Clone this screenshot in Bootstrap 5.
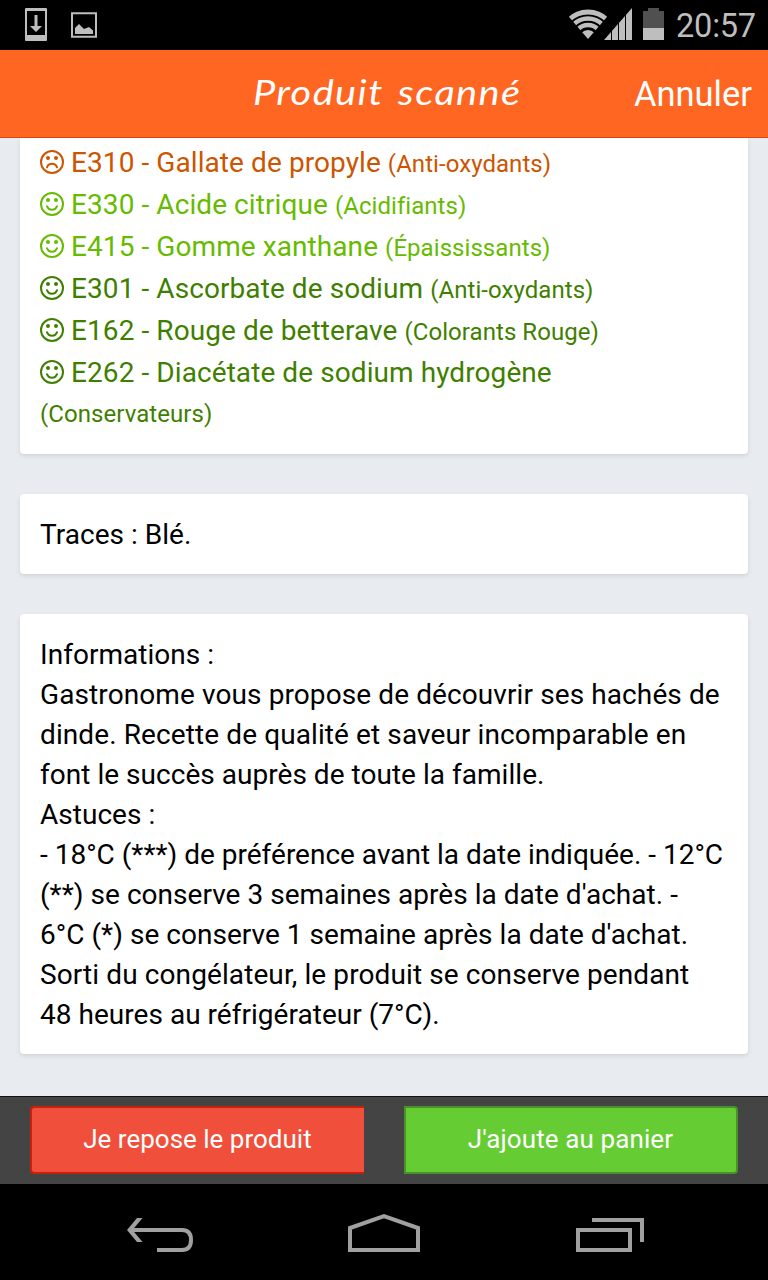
<!DOCTYPE html>
<html lang="fr">
<head>
<meta charset="utf-8">
<meta name="viewport" content="width=device-width, initial-scale=1">
<title>Produit scanné</title>
<link href="https://cdn.jsdelivr.net/npm/bootstrap@5.3.0/dist/css/bootstrap.min.css" rel="stylesheet">
<style>
body{height:1280px;overflow:hidden;background:#e8ebf0;font:28px/40px Roboto,sans-serif;color:#000}
svg{display:block;flex:none}
.status{height:50px;padding:0 12px 0 24px;background:#000;color:#bebebe}
.clock{width:80px;font-size:32.5px;line-height:52px;letter-spacing:-.2px}
.app-head{display:grid;grid-template-columns:1fr auto 1fr;height:88px;padding:0 16px;background:#f62;border-bottom:1px solid #d9480b;color:#fff}
.brand-title{font:italic 34px/84px "Segoe Print","Bradley Hand",Lato,cursive;letter-spacing:1.2px;word-spacing:3px;padding-left:5px;transform:scaleX(1.17)}
.cancel{font:34.5px/88px "Roboto",sans-serif}
.panel{border:0;border-radius:4px;padding:21px 20px 19px;box-shadow:0 2px 4px rgba(0,0,0,.1);color:#000}
.panel + .panel{margin-top:40px}
.first{border-radius:0 0 4px 4px;padding:4px 20px 20px;line-height:42px;letter-spacing:.08px}
.first div{height:42px}
.first .rest{height:40px;line-height:38px}
.first svg{display:inline-block;vertical-align:-2px;margin-right:7px}
.first small{font-size:24px;line-height:1;letter-spacing:.06px}
.bad{color:#cc5500}.good{color:#66bb00}.best{color:#3f7f00}
.loose{letter-spacing:.1px}
.info{letter-spacing:.03px}
.actions{height:88px;padding:9px 30px 10px;gap:40px;background:#444;border-top:1px solid #111}
.actions .btn{font-size:26px;line-height:38px;color:#fff;border-width:2px;padding:0 1px 2px 0}
.put{background:#f04f3b;border-color:#c9200d;border-right:0;border-radius:4px 0 0 4px}
.add{background:#6c3;border-color:#49912a;border-radius:0 4px 4px 0;letter-spacing:.1px}
.sysnav{height:96px;background:#000}
</style>
</head>
<body class="d-flex flex-column">
<svg width="0" height="0" class="position-absolute"><defs>
<g id="face" fill="none" stroke="currentColor" stroke-width="2"><circle cx="12" cy="12" r="11"/></g>
<g id="eyes" fill="currentColor"><circle cx="8" cy="8" r="2"/><circle cx="16" cy="8" r="2"/></g>
<symbol id="happy" viewBox="0 0 24 24"><use href="#face"/><use href="#eyes"/><path d="M7 14.2a5.3 5.3 0 0 0 10 0" fill="none" stroke="currentColor" stroke-width="2" stroke-linecap="round"/></symbol>
<symbol id="sad" viewBox="0 0 24 24"><use href="#face"/><use href="#eyes"/><path d="M7 17.3a5.3 5.3 0 0 1 10 0" fill="none" stroke="currentColor" stroke-width="2" stroke-linecap="round"/></symbol>
</defs></svg>
<div class="status d-flex justify-content-between flex-shrink-0">
<svg width="76" height="50" fill="#bebebe"><path fill-rule="evenodd" d="M2 8h20q1 0 1 1v31q0 1-1 1H2q-1 0-1-1V9q0-1 1-1zm1 3v24h18V11z"/><path d="M10.5 15h3v11H18l-6 6-6-6h4.5z"/><path d="M48 13.2h24v23.6H48z" fill="none" stroke="#bebebe" stroke-width="2"/><path d="M51 34v-6l4-4 5 5 5-2 4 3.500V34z"/></svg>
<div class="d-flex">
<svg width="112" height="50" viewBox="564 0 112 50"><defs><clipPath id="fan"><path d="M588 39L566.500 14V5h43v9z"/></clipPath></defs><g clip-path="url(#fan)" fill="none" stroke="#bebebe"><circle cx="588" cy="39" r="27" stroke-width="5"/><circle cx="588" cy="39" r="20.500" stroke-width="4.500"/><circle cx="588" cy="39" r="14" stroke-width="4.500"/><circle cx="588" cy="39" r="4.500" stroke-width="9"/></g><path d="M604 40L632 8v32z" fill="#bebebe"/><path d="M611.500 25v15M618.500 18v22M625.500 11v29" stroke="#000"/><path d="M643 28V11h5V8h11v3h5v17z" fill="#505050"/><path d="M643 28h21v12h-21z" fill="#bebebe"/></svg>
<span class="clock">20:57</span></div>
</div>
<header class="app-head flex-shrink-0"><span></span><span class="brand-title">Produit scanné</span><span class="cancel text-end">Annuler</span></header>
<main class="flex-grow-1 px-3 mx-1 text-nowrap">
<section class="card panel first">
<div class="bad"><svg width="24" height="24"><use href="#sad"/></svg>E310 - Gallate de propyle <small>(Anti-oxydants)</small></div>
<div class="good"><svg width="24" height="24"><use href="#happy"/></svg>E330 - Acide citrique <small>(Acidifiants)</small></div>
<div class="good"><svg width="24" height="24"><use href="#happy"/></svg>E415 - Gomme xanthane <small>(Épaississants)</small></div>
<div class="best"><svg width="24" height="24"><use href="#happy"/></svg>E301 - Ascorbate de sodium <small>(Anti-oxydants)</small></div>
<div class="best"><svg width="24" height="24"><use href="#happy"/></svg>E162 - Rouge de betterave <small>(Colorants Rouge)</small></div>
<div class="best"><svg width="24" height="24"><use href="#happy"/></svg>E262 - Diacétate de sodium hydrogène</div>
<div class="best rest"><small>(Conservateurs)</small></div>
</section>
<section class="card panel info">Traces : Blé.</section>
<section class="card panel info"><div>Informations :<br><span class="loose">Gastronome vous propose de découvrir ses hachés de<br>dinde. Recette de qualité et saveur incomparable en</span><br>font le succès auprès de toute la famille.<br>Astuces :<br><span style="letter-spacing:0">- 18°C (***) de préférence avant la date indiquée. - 12°C</span><br>(**) se conserve 3 semaines après la date d'achat. -<br>6°C (*) se conserve 1 semaine après la date d'achat.<br><span class="loose">Sorti du congélateur, le produit se conserve pendant</span><br>48 heures au réfrigérateur (7°C).</div></section>
</main>
<div class="actions d-flex flex-shrink-0"><button class="btn put w-50">Je repose le produit</button><button class="btn add w-50">J'ajoute au panier</button></div>
<nav class="sysnav flex-shrink-0"><svg width="768" height="96" viewBox="0 1184 768 96" fill="none" stroke="#a0a0a0" stroke-width="4"><path d="M129 1230h53q9 0 9 10t-9 10h-25M350 1250v-22l34-12 34 12v22zM578 1230h52v20h-52zM592 1220h50v22"/><path d="M137 1218h5.500l-10 12 10 12H137l-10-12z" fill="#a0a0a0" stroke="none"/></svg></nav>
<script src="https://cdn.jsdelivr.net/npm/bootstrap@5.3.0/dist/js/bootstrap.bundle.min.js"></script>
</body>
</html>
